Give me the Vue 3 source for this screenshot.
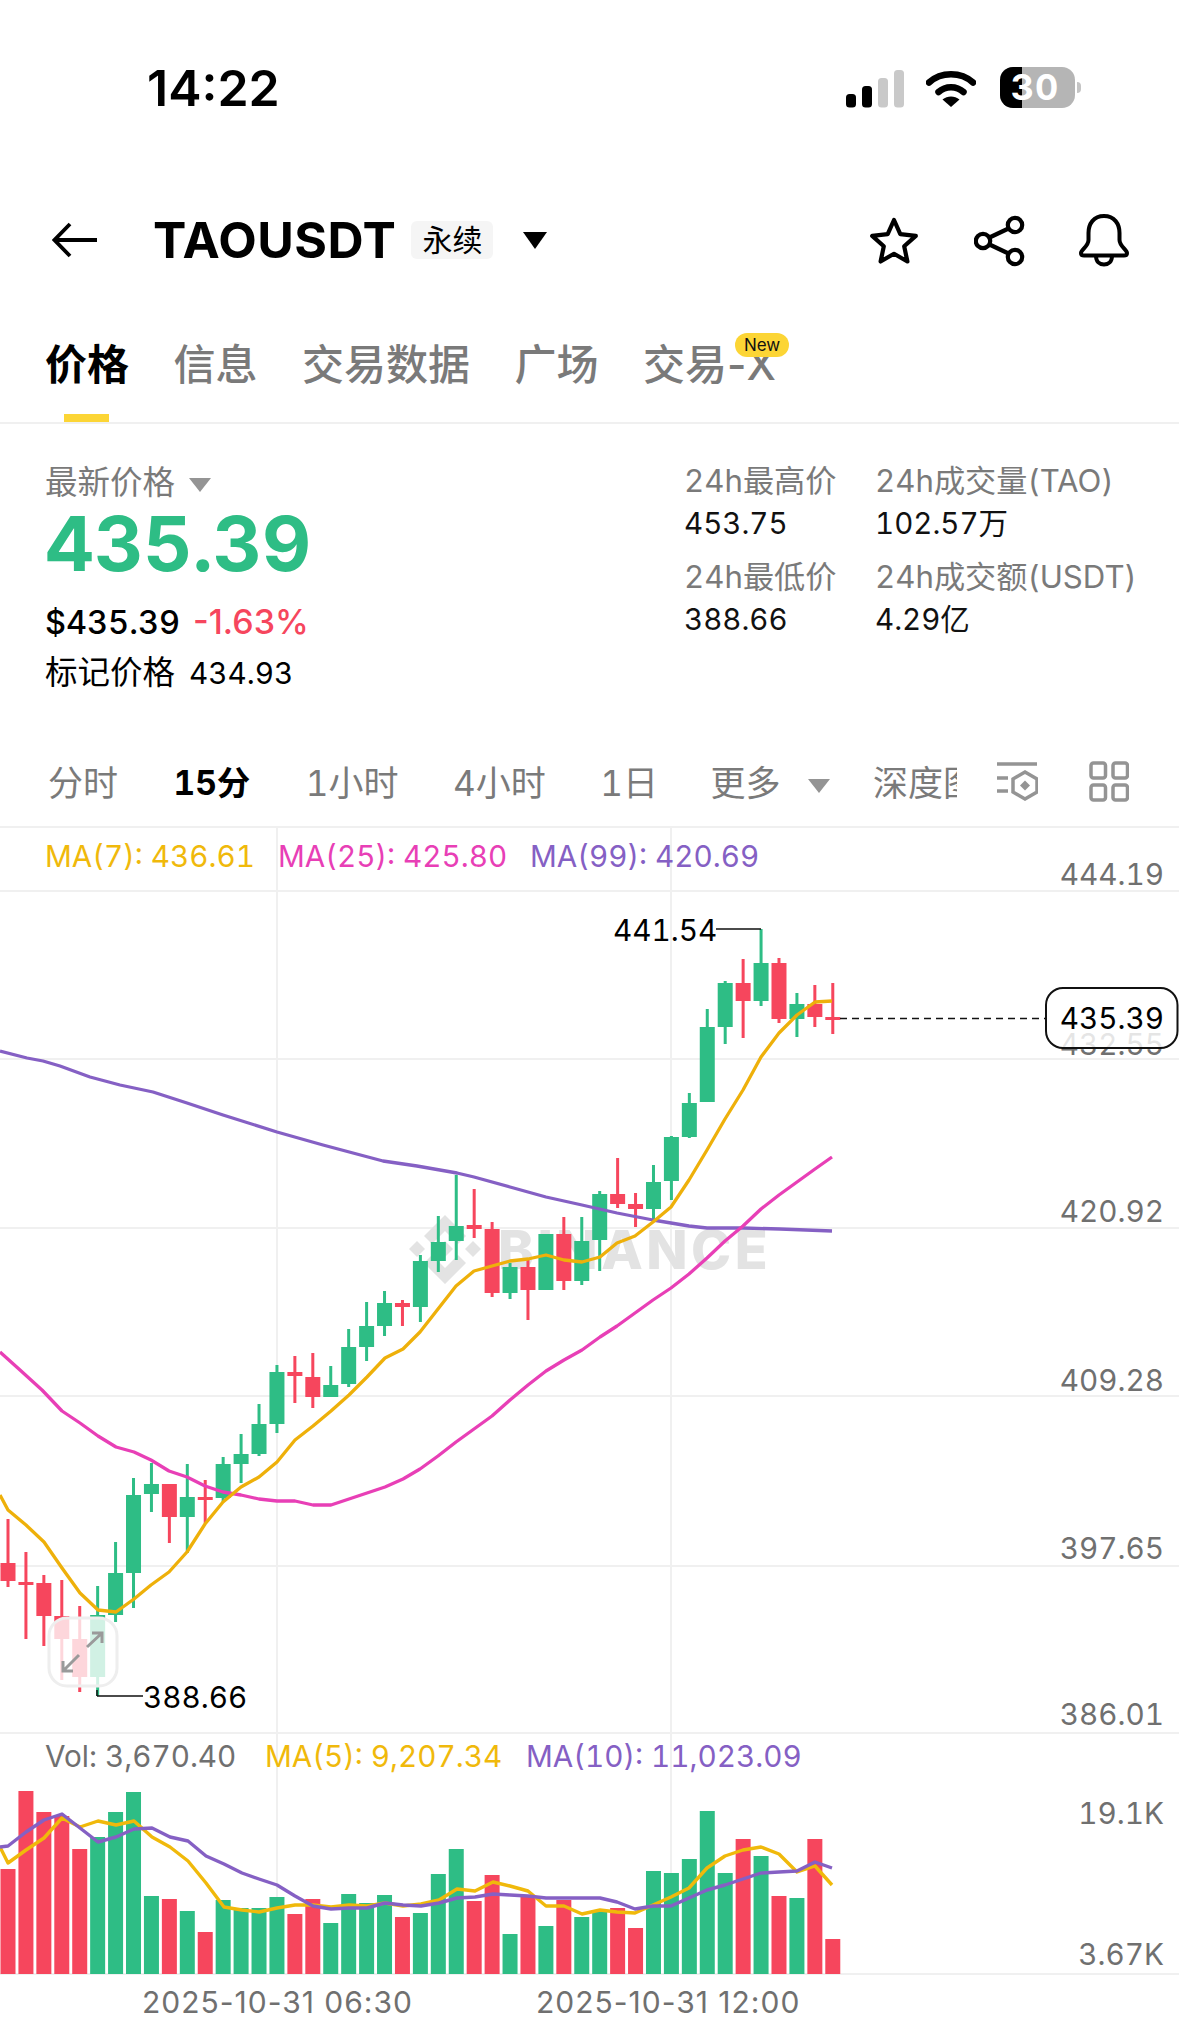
<template>
  <div class="page">
    <div class="status-bar">
      <span class="clock">14:22</span>
      <div class="status-icons">
        <svg width="58" height="38" viewBox="0 0 58 38" class="signal">
          <rect x="0" y="24" width="10" height="13.5" rx="3.5" fill="#000" />
          <rect x="16" y="16" width="10" height="21.5" rx="3.5" fill="#000" />
          <rect x="32" y="8" width="10" height="29.5" rx="3.5" fill="#c9c9c9" />
          <rect x="48" y="0" width="10" height="37.5" rx="3.5" fill="#c9c9c9" />
        </svg>
        <svg width="50" height="38" viewBox="0 0 50 38" class="wifi">
          <path d="M3 12.5C15 1.5 35 1.5 47 12.5" fill="none" stroke="#000" stroke-width="6.5" stroke-linecap="round" stroke-linejoin="round" />
          <path d="M12.5 22C19.5 15.5 30.5 15.5 37.5 22" fill="none" stroke="#000" stroke-width="6.5" stroke-linecap="round" />
          <path d="M25 37L16.5 29.5C21.5 25.5 28.5 25.5 33.5 29.5Z" fill="#000" />
        </svg>
        <div class="battery">
          <div class="battery-fill"></div>
          <span class="battery-num">30</span>
        </div>
        <div class="battery-nub"></div>
      </div>
    </div>

    <div class="nav">
      <svg class="back" width="46" height="36" viewBox="0 0 46 36">
        <path d="M45 18H3M18 2L2.5 18L18 34" fill="none" stroke="#000" stroke-width="3.8" />
      </svg>
      <span class="symbol">TAOUSDT</span>
      <span class="tag">永续</span>
      <i class="caret caret-black"></i>
      <div class="nav-icons">
        <svg width="50" height="48" viewBox="0 0 50 48">
          <path d="M25 3L31.3 17.2L46.8 18.9L35.2 29.3L38.4 44.5L25 36.8L11.6 44.5L14.8 29.3L3.2 18.9L18.7 17.2Z" fill="none" stroke="#000" stroke-width="4.2" stroke-linejoin="round" />
        </svg>
        <svg width="52" height="52" viewBox="0 0 52 52">
          <circle cx="41" cy="10" r="7.2" fill="none" stroke="#000" stroke-width="4.2" />
          <circle cx="9" cy="26" r="7.2" fill="none" stroke="#000" stroke-width="4.2" />
          <circle cx="41" cy="42" r="7.2" fill="none" stroke="#000" stroke-width="4.2" />
          <path d="M15.5 22.5L34.5 13.5M15.5 29.5L34.5 38.5" stroke="#000" stroke-width="4.2" />
        </svg>
        <svg class="bell" width="50" height="53" viewBox="0 0 50 53">
          <path d="M25 2C14.5 2 9.5 10 9.5 19V26C9.5 32 2 36 2 39C2 40.6 3 41.5 5 41.5H45C47 41.5 48 40.6 48 39C48 36 40.5 32 40.5 26V19C40.5 10 35.500 2 25 2Z" fill="none" stroke="#000" stroke-width="4" stroke-linejoin="round" />
          <path d="M17 42C17 47.500 20.500 50.500 25 50.500C29.500 50.500 33 47.500 33 42" fill="none" stroke="#000" stroke-width="4" />
        </svg>
      </div>
    </div>

    <div class="tabs">
      <div v-for="(t, i) in tabs" :key="t" class="tab" :class="{ active: i === 0 }">
        {{ t }}
        <span v-if="i === 4" class="badge">New</span>
      </div>
    </div>

    <div class="price-panel">
      <div class="price-left">
        <div class="price-label">最新价格<i class="caret caret-grey"></i></div>
        <div class="price-main">435.39</div>
        <div class="price-sub">$435.39<span class="pct">-1.63%</span></div>
        <div class="price-mark">标记价格<span>434.93</span></div>
      </div>
      <div class="stats">
        <div v-for="s in stats" :key="s[0]" class="stat">
          <div class="stat-label">{{ s[0] }}</div>
          <div class="stat-value">{{ s[1] }}</div>
        </div>
      </div>
    </div>

    <div class="intervals">
      <span v-for="(t, i) in intervals" :key="t" class="interval" :class="{ on: i === 1 }">{{ t }}</span>
      <span class="interval more">更多<i class="caret caret-grey"></i></span>
      <span class="interval depth">深度图</span>
      <svg class="depth-icon" width="42" height="42" viewBox="0 0 42 42">
        <path d="M1 3H41M1 17H12M1 30H12" stroke="#949494" stroke-width="3.500" />
        <path d="M29 11L41 18V31L29 38L17 31V18Z" fill="none" stroke="#949494" stroke-width="3.500" />
        <path d="M29 19.500L34 24.500L29 29.500L24 24.500Z" fill="#949494" />
      </svg>
      <svg class="grid-icon" width="40" height="42" viewBox="0 0 40 42">
        <rect x="2" y="2" width="14.500" height="15" rx="2.500" fill="none" stroke="#949494" stroke-width="3.500" />
        <rect x="24" y="2" width="14.500" height="15" rx="2.500" fill="none" stroke="#949494" stroke-width="3.500" />
        <rect x="2" y="24" width="14.500" height="15" rx="2.500" fill="none" stroke="#949494" stroke-width="3.500" />
        <rect x="24" y="24" width="14.500" height="15" rx="2.500" fill="none" stroke="#949494" stroke-width="3.500" />
      </svg>
    </div>

    <!-- chart uses page coordinates, viewBox starts at its top edge -->
    <svg class="chart" width="1179" height="1194" viewBox="0 828 1179 1194">
      <path v-for="y in gridY" :key="y" :d="`M0 ${y}H1179`" stroke="#f0f0f0" stroke-width="2" />
      <path d="M277 828V1974M671 828V1974" stroke="#f0f0f0" stroke-width="2" />

      <g fill="#e3e3e3">
        <path d="M445 1215l21 21-8 8-13-13-13 13-8-8zM445 1284l21-21-8-8-13 13-13-13-8 8zM417 1241l8 8-8 8-8-8zM473 1241l8 8-8 8-8-8zM445 1241l8 8-8 8-8-8z" />
        <text x="498" y="1269" class="mark-text">BINANCE</text>
      </g>

      <g v-for="(c, i) in candles" :key="i" :fill="c[0] === 'g' ? green : red">
        <rect :x="cx(i) - 1.5" :y="c[1]" width="3" :height="c[2] - c[1]" />
        <rect :x="cx(i) - 7.500" :y="c[3]" width="15" :height="c[4] - c[3]" />
        <rect :x="cx(i) - 7.500" :y="vols[i]" width="15" :height="1974 - vols[i]" />
      </g>

      <polyline :points="ma99" class="line" stroke="#8560c4" />
      <polyline :points="ma25" class="line" stroke="#e83fb6" />
      <polyline :points="ma7" class="line" stroke="#eeb00a" />
      <polyline :points="volMa5" class="line thick" stroke="#f0b90b" />
      <polyline :points="volMa10" class="line thick" stroke="#8560c4" />

      <rect x="49" y="1618" width="68" height="68" rx="18" fill="#fff" fill-opacity=".78" stroke="#eeeeee" stroke-width="3" />
      <path d="M87 1647L102 1633M92 1633H102V1643M79 1655L63 1671M63 1661V1671H73" fill="none" stroke="#9a9a9a" stroke-width="3" />

      <text x="45" y="867" class="label" fill="#f0b90b">MA(7): 436.61</text>
      <text x="278" y="867" class="label" fill="#e83fb6">MA(25): 425.80</text>
      <text x="530" y="867" class="label" fill="#8560c4">MA(99): 420.69</text>

      <text v-for="a in axis" :key="a[0]" x="1164" :y="a[1]" class="label axis">{{ a[0] }}</text>

      <text x="613" y="941" class="label" fill="#000">441.54</text>
      <path d="M716 929H761M97 1696H143M97 1690V1696" fill="none" stroke="#111" stroke-width="1.5" />
      <text x="143" y="1708" class="label" fill="#000">388.66</text>

      <path d="M840 1018.500H1046" stroke="#111" stroke-width="1.5" stroke-dasharray="7 5" />
      <rect x="1046" y="988" width="131.500" height="60" rx="17" fill="#fff" fill-opacity=".82" stroke="#111" stroke-width="2" />
      <text x="1164" y="1029" class="label axis" style="fill:#000">435.39</text>

      <text x="45" y="1767" class="label" fill="#707070">Vol: 3,670.40</text>
      <text x="265" y="1767" class="label" fill="#f0b90b">MA(5): 9,207.34</text>
      <text x="526" y="1767" class="label" fill="#8560c4">MA(10): 11,023.09</text>

      <text x="142" y="2013" class="label date" fill="#707070">2025-10-31 06:30</text>
      <text x="536" y="2013" class="label date" fill="#707070">2025-10-31 12:00</text>
    </svg>
  </div>
</template>

<script setup>
const green = '#2ebd85'
const red = '#f6465d'

const tabs = ['价格', '信息', '交易数据', '广场', '交易-X']
const intervals = ['分时', '15分', '1小时', '4小时', '1日']
const stats = [
  ['24h最高价', '453.75'],
  ['24h成交量(TAO)', '102.57万'],
  ['24h最低价', '388.66'],
  ['24h成交额(USDT)', '4.29亿'],
]
const gridY = [891, 1059, 1228, 1396, 1566, 1733, 1974]
const axis = [
  ['444.19', 885],
  ['432.55', 1055],
  ['420.92', 1222],
  ['409.28', 1391],
  ['397.65', 1559],
  ['386.01', 1725],
  ['19.1K', 1824],
  ['3.67K', 1965],
]

const cx = (i) => 8 + i * 17.93

// colour, wick top, wick bottom, body top, body bottom
const candles = [
  ['r', 1519, 1587, 1563, 1581], ['r', 1552, 1639, 1582, 1585], ['r', 1575, 1646, 1583, 1616],
  ['r', 1580, 1680, 1616, 1639], ['r', 1606, 1692, 1639, 1677], ['g', 1586, 1696, 1615, 1677],
  ['g', 1542, 1622, 1573, 1615], ['g', 1478, 1608, 1495, 1573], ['g', 1463, 1512, 1484, 1494],
  ['r', 1484, 1543, 1484, 1517], ['g', 1464, 1553, 1497, 1517], ['r', 1480, 1523, 1497, 1500],
  ['g', 1457, 1502, 1464, 1498], ['g', 1434, 1483, 1454, 1464], ['g', 1404, 1456, 1424, 1454],
  ['g', 1365, 1433, 1372, 1424], ['r', 1356, 1403, 1372, 1376], ['r', 1353, 1408, 1377, 1397],
  ['g', 1366, 1397, 1385, 1397], ['g', 1329, 1387, 1347, 1384], ['g', 1302, 1361, 1326, 1347],
  ['g', 1291, 1336, 1303, 1326], ['r', 1300, 1326, 1303, 1307], ['g', 1255, 1322, 1261, 1307],
  ['g', 1216, 1272, 1242, 1261], ['g', 1175, 1260, 1226, 1241], ['r', 1189, 1238, 1225, 1229],
  ['r', 1222, 1297, 1229, 1293], ['g', 1263, 1299, 1267, 1293], ['r', 1260, 1320, 1267, 1290],
  ['g', 1234, 1290, 1234, 1290], ['r', 1217, 1290, 1234, 1281], ['g', 1217, 1285, 1241, 1281],
  ['g', 1191, 1271, 1194, 1240], ['r', 1158, 1208, 1194, 1204], ['r', 1193, 1227, 1204, 1209],
  ['g', 1165, 1220, 1182, 1209], ['g', 1136, 1200, 1137, 1181], ['g', 1093, 1138, 1103, 1137],
  ['g', 1009, 1102, 1027, 1102], ['g', 981, 1044, 983, 1027], ['r', 959, 1038, 983, 1001],
  ['g', 929, 1006, 963, 1001], ['r', 958, 1023, 963, 1019], ['g', 993, 1037, 1004, 1019],
  ['r', 985, 1027, 1004, 1017], ['r', 983, 1034, 1017, 1020],
]

const vols = [
  1869, 1791, 1812, 1816, 1849, 1837, 1812, 1792, 1896, 1899, 1911, 1932, 1900, 1908, 1908, 1897,
  1914, 1899, 1923, 1894, 1903, 1895, 1917, 1913, 1874, 1849, 1901, 1875, 1934, 1897, 1926, 1900,
  1917, 1911, 1908, 1928, 1871, 1873, 1859, 1811, 1873, 1839, 1856, 1896, 1898, 1839, 1939,
]

const ma7 = '0,1495 8,1510 26,1525 44,1542 62,1568 80,1593 98,1610 116,1612 134,1599 151,1585 169,1572 187,1552 205,1524 223,1502 241,1487 259,1477 277,1462 295,1440 313,1426 331,1411 349,1395 367,1377 385,1358 403,1349 420,1332 438,1309 456,1286 474,1271 492,1266 510,1261 528,1259 546,1255 564,1260 582,1262 600,1257 617,1243 635,1236 653,1222 671,1207 689,1180 707,1150 725,1119 743,1090 761,1057 779,1033 797,1015 815,1002 832,1001'
const ma25 = '0,1352 20,1370 42,1390 62,1411 80,1423 98,1436 116,1447 134,1452 151,1460 169,1471 187,1477 205,1486 223,1492 241,1495 259,1499 277,1501 295,1501 313,1505 331,1505 349,1499 367,1493 385,1487 403,1479 420,1469 438,1456 456,1442 474,1429 492,1416 510,1400 528,1385 546,1371 564,1360 582,1350 600,1337 617,1326 635,1313 653,1300 671,1288 689,1274 707,1258 725,1241 743,1226 761,1209 779,1195 797,1182 815,1169 832,1157'
const ma99 = '0,1051 27,1058 43,1061 60,1066 90,1077 120,1085 153,1092 187,1103 223,1115 277,1132 323,1145 383,1161 417,1166 457,1173 474,1177 510,1187 546,1197 582,1205 617,1213 653,1220 689,1226 707,1228 743,1228 780,1229 832,1231'
const volMa5 = '0,1847 8,1863 26,1850 44,1838 62,1818 80,1827 98,1821 116,1825 134,1821 152,1837 170,1847 188,1861 206,1883 224,1907 242,1910 259,1912 277,1908 295,1905 313,1905 331,1907 349,1905 367,1906 385,1903 403,1906 421,1904 439,1900 457,1889 475,1891 493,1882 510,1886 528,1891 546,1906 564,1906 582,1914 600,1910 617,1912 635,1913 653,1905 671,1897 689,1888 707,1868 725,1856 743,1850 761,1847 779,1854 797,1872 815,1866 832,1885'
const volMa10 = '0,1847 8,1846 26,1832 44,1820 62,1814 80,1828 98,1842 116,1837 134,1829 152,1828 170,1837 188,1841 206,1856 224,1864 242,1873 259,1879 277,1885 295,1896 313,1906 331,1909 349,1908 367,1908 385,1903 403,1905 421,1906 439,1903 457,1898 475,1897 493,1894 510,1895 528,1896 546,1898 564,1898 582,1898 600,1898 617,1902 635,1909 653,1906 671,1906 689,1898 707,1890 725,1885 743,1879 761,1873 779,1872 797,1871 815,1862 832,1868'
</script>

<style>
html,
body {
  margin: 0;
  background: #fff;
}
</style>

<style scoped>
.page {
  width: 1179px;
  height: 2022px;
  overflow: hidden;
  background: #fff;
  font-family: Inter, "Noto Sans CJK SC", sans-serif;
  font-variant-numeric: tabular-nums;
  color: #000;
}

.status-bar {
  height: 190px;
  display: flex;
  align-items: flex-start;
  box-sizing: border-box;
  padding-top: 58px;
}
.clock {
  margin-left: 147px;
  font-size: 50px;
  font-weight: 600;
  line-height: 60px;
  font-variant-numeric: normal;
}
.status-icons {
  margin-left: auto;
  margin-right: 98px;
  display: flex;
  align-items: center;
  margin-top: 9px;
}
.signal {
  margin-right: 22px;
  margin-top: 2px;
}
.wifi {
  margin-right: 24px;
  margin-top: 2px;
}
.battery {
  position: relative;
  width: 75px;
  height: 41px;
  border-radius: 13px;
  background: #b5b5b5;
  box-sizing: border-box;
  padding-right: 5px;
  text-align: center;
}
.battery-fill {
  position: absolute;
  left: 0;
  top: 0;
  bottom: 0;
  width: 22px;
  background: #000;
  border-radius: 13px 0 0 13px;
}
.battery-num {
  position: relative;
  color: #fff;
  font-size: 36px;
  font-weight: 700;
  letter-spacing: 1px;
  line-height: 41px;
}
.battery-nub {
  width: 4px;
  height: 11px;
  margin-left: 2px;
  background: #c4c4c4;
  border-radius: 0 6px 6px 0;
}

.nav {
  height: 100px;
  display: flex;
  align-items: center;
  position: relative;
}
.back {
  margin-left: 52px;
}
.symbol {
  margin-left: 55px;
  font-size: 50px;
  font-weight: 700;
  letter-spacing: 0.5px;
  line-height: 60px;
}
.tag {
  margin-left: 15px;
  width: 82px;
  height: 38px;
  line-height: 38px;
  text-align: center;
  font-size: 30px;
  background: #f5f5f5;
  border-radius: 6px;
}
.caret {
  display: inline-block;
  width: 0;
  height: 0;
  border-style: solid;
  border-color: transparent;
  border-bottom-width: 0;
}
.caret-black {
  margin-left: 30px;
  border-width: 17px 12.5px 0;
  border-top-color: #000;
}
.caret-grey {
  border-width: 14px 11px 0;
  border-top-color: #949494;
  vertical-align: middle;
}
.nav-icons {
  position: absolute;
  left: 869px;
  top: 24px;
  display: flex;
  align-items: center;
  gap: 55px;
}
.bell {
  margin-left: -2px;
}

.tabs {
  height: 132px;
  display: flex;
  gap: 44.500px;
  padding-left: 45px;
  border-bottom: 2px solid #f0f0f0;
  box-sizing: content-box;
  font-variant-numeric: normal;
}
.tab {
  position: relative;
  margin-top: 50px;
  height: 82px;
  line-height: 50px;
  font-size: 42px;
  font-weight: 500;
  color: #7a7a7a;
  white-space: nowrap;
}
.tab.active {
  color: #000;
  font-weight: 700;
}
.tab.active::after {
  content: "";
  position: absolute;
  left: 19px;
  bottom: 0;
  width: 45px;
  height: 8px;
  background: #fcd535;
}
.badge {
  position: absolute;
  left: 92px;
  top: -7px;
  width: 54px;
  height: 24px;
  line-height: 24px;
  border-radius: 12px;
  background: #fcd535;
  color: #111;
  font-size: 17px;
  font-weight: 400;
  text-align: center;
}

.price-panel {
  height: 311px;
  display: flex;
}
.price-left {
  width: 684px;
  padding: 38px 0 0 45px;
  box-sizing: border-box;
}
.price-label {
  line-height: 42px;
  font-size: 32.500px;
  color: #7a7a7a;
  white-space: nowrap;
}
.price-label .caret {
  margin-left: 14px;
}
.price-main {
  line-height: 78px;
  font-size: 76px;
  font-weight: 700;
  color: #2ebd85;
}
.price-sub {
  margin-top: 15px;
  line-height: 50px;
  font-size: 32.500px;
  font-weight: 500;
}
.pct {
  margin-left: 13px;
  font-size: 34px;
  color: #f6465d;
  font-variant-numeric: normal;
}
.price-mark {
  line-height: 50px;
  font-size: 32.500px;
}
.price-mark span {
  margin-left: 14px;
  font-size: 29.700px;
}
.stats {
  display: grid;
  grid-template-columns: 191px 1fr;
  align-content: start;
  padding-top: 35px;
}
.stat {
  height: 96px;
  white-space: nowrap;
}
.stat-label {
  line-height: 44px;
  font-size: 31.200px;
  color: #7a7a7a;
}
.stat-value {
  line-height: 41px;
  font-size: 29.500px;
  color: #111;
}

.intervals {
  height: 93px;
  display: flex;
  align-items: center;
  gap: 54.500px;
  padding-left: 48px;
  border-bottom: 2px solid #f0f0f0;
  box-sizing: border-box;
}
.interval {
  font-size: 35px;
  color: #7a7a7a;
  white-space: nowrap;
}
.interval.on {
  color: #000;
  font-weight: 700;
  font-size: 33.500px;
  margin-left: 1px;
  margin-right: 1px;
}
.more {
  margin-left: -2px;
}
.more .caret {
  margin-left: 28px;
}
.depth {
  width: 84px;
  overflow: hidden;
  margin-left: -12px;
}
.depth-icon {
  margin-left: -15.500px;
  margin-top: 3px;
}
.grid-icon {
  margin-left: -3px;
  margin-top: 3px;
}

.chart {
  display: block;
}
.line {
  fill: none;
  stroke-width: 3.300;
  stroke-linejoin: round;
}
.thick {
  stroke-width: 3.400;
}
.label {
  font-size: 29.700px;
}
.date {
  font-size: 30px;
  font-variant-numeric: normal;
  letter-spacing: 1px;
}
.axis {
  fill: #707070;
  text-anchor: end;
}
.mark-text {
  font-size: 54px;
  font-weight: 800;
  letter-spacing: 3.500px;
}
</style>
